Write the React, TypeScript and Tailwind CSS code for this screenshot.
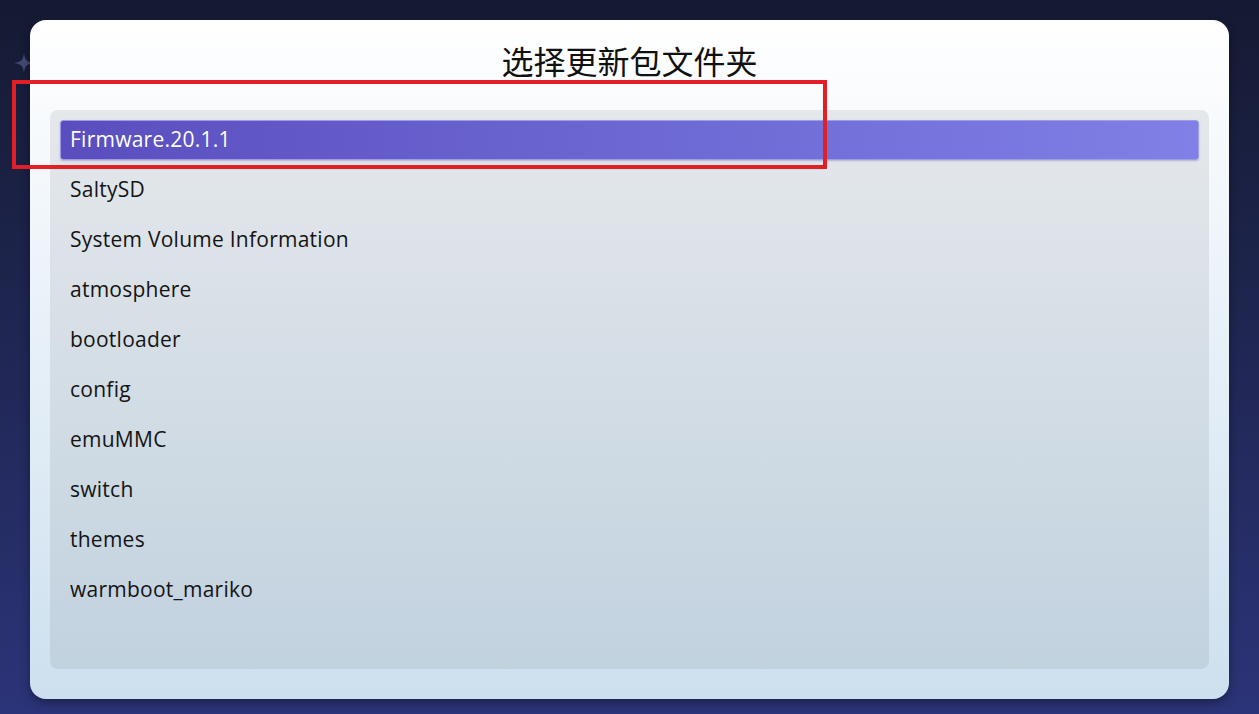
const folders = [
  'Firmware.20.1.1',
  'SaltySD',
  'System Volume Information',
  'atmosphere',
  'bootloader',
  'config',
  'emuMMC',
  'switch',
  'themes',
  'warmboot_mariko',
];

export default function App() {
  const selected = 0;

  return (
    <div
      className="relative w-[1259px] h-[714px] overflow-hidden bg-gradient-to-b from-[#151a32] to-[#2c3479] pt-[20px] pl-[30px]"
      style={{ fontFamily: '"Open Sans", "Noto Sans", "Noto Sans CJK SC", sans-serif' }}
    >
      {/* sparkle peeking out behind the dialog */}
      <svg className="absolute left-[14px] top-[53px] opacity-70" width="20" height="20" viewBox="0 0 22 22">
        <path d="M11 0 C12 8 14 10 22 11 C14 12 12 14 11 22 C10 14 8 12 0 11 C8 10 10 8 11 0 Z" fill="#555c8c" />
      </svg>

      <div className="relative w-[1199px] h-[679px] rounded-[16px] bg-gradient-to-b from-[#ffffff] to-[#cde0ef] shadow-[0_4px_10px_rgba(0,0,0,0.35)] flex flex-col">
        <div className="h-[90px] pt-[22px] text-center text-[32px] leading-[36px] text-[#111]"
          style={{ fontFamily: '"Noto Sans CJK SC", "Noto Sans", sans-serif' }}>
          选择更新包文件夹
        </div>

        <div className="mx-[20px] h-[559px] rounded-[8px] bg-gradient-to-b from-[#e5e8eb] to-[#c1d2df] p-[10px] flex flex-col gap-[10px]">
          {folders.map((name, i) => (
            <div
              key={name}
              className={
                i === selected
                  ? 'h-[40px] flex items-center px-[9px] rounded-[3px] bg-gradient-to-r from-[#5a4ebf] to-[#8080e6] border border-[#9c9ce8] shadow-[0_1px_2px_rgba(60,60,140,0.3)] text-white text-[21px] tracking-[0.25px]'
                  : 'h-[40px] flex items-center px-[10px] text-[#141414] text-[21px] tracking-[0.25px]'
              }
            >
              {name}
            </div>
          ))}
        </div>
      </div>

      {/* red highlight annotation */}
      <div className="absolute left-[12px] top-[80px] w-[815px] h-[89px] border-[4px] border-[#e21f26]" />
    </div>
  );
}
